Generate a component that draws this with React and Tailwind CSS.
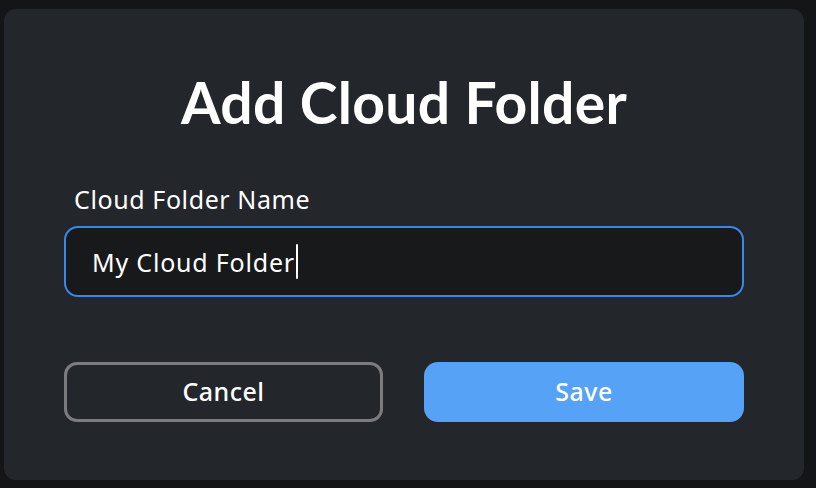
import React from 'react';

export default function App() {
  return (
    <div className="w-[816px] h-[488px] bg-[#141516] pl-[4px] pt-[9px] pr-[12px] pb-[8px] font-['Noto_Sans',sans-serif]">
      <div className="h-full bg-[#23262b] rounded-[12px] px-[60px] flex flex-col">
        <h1 className="mt-[61px] text-center text-white font-bold text-[57px] leading-[64px] font-['Lato',sans-serif] tracking-[0.3px]">
          Add Cloud Folder
        </h1>

        <label className="mt-[48px] ml-[10px] text-white text-[25px] leading-[34px] tracking-[0.6px]">
          Cloud Folder Name
        </label>

        <div className="mt-[10px] h-[71px] rounded-[14px] border-2 border-[#3c86e8] bg-[#18191b] flex items-center pl-[26px]">
          <span className="text-white text-[25px] leading-[34px] tracking-[0.8px]">My Cloud Folder</span>
          <span className="ml-[1px] w-[2px] h-[35px] bg-white rounded-sm"></span>
        </div>

        <div className="mt-[65px] flex justify-between">
          <button className="w-[319px] h-[60px] rounded-[13px] border-[3px] border-[#7b7c7e] text-white text-[25px] font-medium tracking-[0.5px]">
            Cancel
          </button>
          <button className="w-[320px] h-[60px] rounded-[14px] bg-[#55a2f6] text-white text-[25px] font-medium tracking-[0.5px]">
            Save
          </button>
        </div>
      </div>
    </div>
  );
}
